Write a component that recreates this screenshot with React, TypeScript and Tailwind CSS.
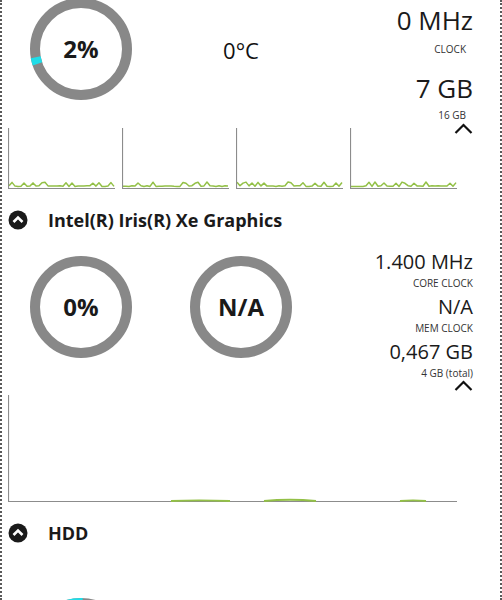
import React from 'react';

type RingProps = { label: string; arc?: number; start?: number };

function Ring({ label, arc = 0, start = 0 }: RingProps) {
  const c = 2 * Math.PI * 46;
  return (
    <div className="relative w-[104px] h-[104px] flex items-center justify-center shrink-0">
      <svg className="absolute inset-0" width="104" height="104" viewBox="0 0 104 104">
        <circle cx="52" cy="52" r="46" fill="none" stroke="#888888" strokeWidth="10" />
        {arc > 0 && (
          <circle
            cx="52"
            cy="52"
            r="46"
            fill="none"
            stroke="#1fdde8"
            strokeWidth="10"
            strokeDasharray={`${arc} ${c}`}
            transform={`rotate(${start} 52 52)`}
          />
        )}
      </svg>
      <span className="relative text-[24px] font-bold text-[#1a1a1a] leading-none">{label}</span>
    </div>
  );
}

// small deterministic noise for the load graphs
function noise(seed: number, n: number) {
  let s = seed;
  const out: number[] = [];
  for (let i = 0; i < n; i++) {
    s = (s * 9301 + 49297) % 233280;
    out.push(s / 233280);
  }
  return out;
}

function MiniChart({ seed }: { seed: number }) {
  const pts = noise(seed, 36)
    .map((v, i) => {
      const x = 1 + i * 3;
      const y = 58.5 - (v > 0.7 ? v * 4.5 : v * 1.2);
      return `${x},${y.toFixed(1)}`;
    })
    .join(' ');
  return (
    <svg width="107" height="61" viewBox="0 0 107 61" className="block">
      <polyline points={pts} fill="none" stroke="#93c047" strokeWidth="1.5" strokeLinejoin="round" />
      <path d="M0.5 0 V60.5 H107" fill="none" stroke="#8c8c8c" strokeWidth="1.2" />
    </svg>
  );
}

function BigChart() {
  return (
    <svg width="450" height="108" viewBox="0 0 450 108" className="block">
      <path d="M0.5 0 V106.5 H449" fill="none" stroke="#8c8c8c" strokeWidth="1.2" />
      <path
        d="M163 106 Q190 104.8 222 106 M256 106 Q282 103.5 308 106 M392 106 Q405 104.8 418 106"
        fill="none"
        stroke="#93c047"
        strokeWidth="1.8"
      />
    </svg>
  );
}

function Chevron() {
  return (
    <svg width="19" height="11" viewBox="0 0 19 11" className="block">
      <path d="M1.5 10 L9.5 2 L17.5 10" fill="none" stroke="#111" strokeWidth="2.2" />
    </svg>
  );
}

function SectionHeader({ title }: { title: string }) {
  return (
    <div className="flex items-center pl-[6px] h-[20px]">
      <svg width="20" height="20" viewBox="0 0 20 20" className="shrink-0">
        <circle cx="10" cy="10" r="9.5" fill="#1a1a1a" />
        <path d="M5.5 12 L10 7.5 L14.5 12" fill="none" stroke="#fff" strokeWidth="2.6" />
      </svg>
      <span className="ml-[20px] text-[18px] font-bold text-[#1a1a1a] leading-none">{title}</span>
    </div>
  );
}

function Stat({ value, label }: { value: string; label: string }) {
  return (
    <div className="flex flex-col items-end">
      <span className="text-[20px] leading-none text-[#1a1a1a]">{value}</span>
      <span className="text-[10px] leading-none mt-[6px] text-[#333]">{label}</span>
    </div>
  );
}

export default function App() {
  return (
    <div className="w-[502px] h-[600px] overflow-hidden bg-white border-x-2 border-dotted border-[#5a5a5a] font-['Open_Sans','Noto_Sans',sans-serif]">
      {/* CPU */}
      <div className="flex items-start -mt-[3px]">
        <div className="pl-[27px]">
          <Ring label="2%" arc={7} start={161} />
        </div>
        <div className="ml-[56px] w-[104px] h-[104px] flex items-center justify-center">
          <span className="text-[22px] text-[#111] leading-none mt-[2px]">0°C</span>
        </div>
        <div className="flex-1 flex flex-col items-end pr-[27px] pt-[10px]">
          <span className="text-[26px] leading-none text-[#1a1a1a]">0 MHz</span>
          <span className="text-[10px] leading-none mt-[11px] mr-[7px] text-[#333]">CLOCK</span>
          <span className="text-[26px] leading-none mt-[21px] text-[#1a1a1a]">7 GB</span>
          <span className="text-[10px] leading-none mt-[9px] mr-[7px] text-[#333]">16 GB</span>
          <div className="mt-[3px]">
            <Chevron />
          </div>
        </div>
      </div>

      <div className="flex gap-[7px] pl-[6px] -mt-[6px]">
        <MiniChart seed={11} />
        <MiniChart seed={27} />
        <MiniChart seed={43} />
        <MiniChart seed={71} />
      </div>

      <div className="mt-[21px]">
        <SectionHeader title="Intel(R) Iris(R) Xe Graphics" />
      </div>

      {/* GPU */}
      <div className="flex items-start mt-[22px]">
        <div className="pl-[27px] pt-[3px]">
          <Ring label="0%" />
        </div>
        <div className="ml-[56px] pt-[3px]">
          <Ring label="N/A" />
        </div>
        <div className="flex-1 flex flex-col items-end gap-[9px] pr-[27px]">
          <Stat value="1.400 MHz" label="CORE CLOCK" />
          <Stat value="N/A" label="MEM CLOCK" />
          <div className="flex flex-col items-end">
            <Stat value="0,467 GB" label="4 GB (total)" />
            <div className="mt-[2px]">
              <Chevron />
            </div>
          </div>
        </div>
      </div>

      <div className="pl-[6px] mt-[4px]">
        <BigChart />
      </div>

      <div className="mt-[20px]">
        <SectionHeader title="HDD" />
      </div>

      <div className="pl-[27px] mt-[54px]">
        <Ring label="" arc={40} start={222} />
      </div>
    </div>
  );
}
